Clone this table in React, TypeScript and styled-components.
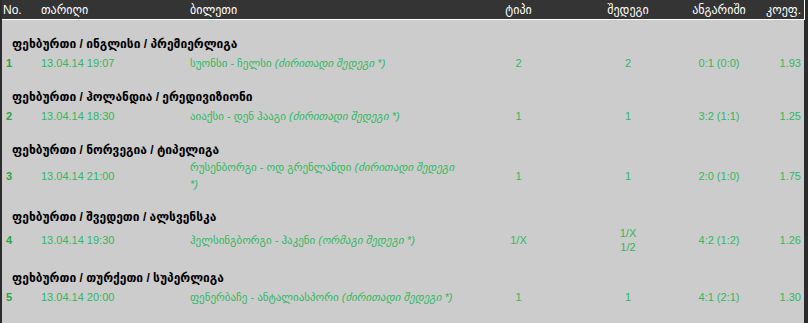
import React from "react";
import styled, { createGlobalStyle } from "styled-components";

const GlobalStyle = createGlobalStyle`
  html, body {
    margin: 0;
    padding: 0;
    background: #2b2b2b;
  }
  body {
    font-family: "Liberation Sans", "DejaVu Sans", sans-serif;
  }
`;

const COLS = "36px 149px 283px 97px 122px 60px 55px";

const Board = styled.div`
  width: 802px;
  margin-left: 2px;
  min-height: 323px;
  background: #cccccc;
`;

const Header = styled.div`
  display: grid;
  grid-template-columns: ${COLS};
  height: 20px;
  width: 803px;
  box-sizing: border-box;
  background: #343434;
  border-right: 1px solid #ffffff;
  border-bottom: 1px solid #ffffff;
  color: #ffffff;
  font-size: 12px;
  align-items: center;
`;

const HeadCell = styled.div<{ $align?: "left" | "center" | "right"; $pad?: number }>`
  text-align: ${(p) => p.$align || "left"};
  padding: 0 ${(p) => (p.$align === "right" ? "3px" : "0")} 0
    ${(p) => (p.$pad !== undefined ? p.$pad : 3)}px;
  white-space: nowrap;
`;

const GroupTitle = styled.div`
  padding: 16px 0 1px 10px;
  font-size: 12px;
  line-height: 16px;
  font-weight: bold;
  color: #000000;
`;

const Row = styled.div`
  display: grid;
  grid-template-columns: ${COLS};
  align-items: center;
  min-height: 20px;
  color: #2fb95e;
  font-size: 11px;
  line-height: 14px;
`;

const Cell = styled.div<{ $align?: "left" | "center" | "right" }>`
  text-align: ${(p) => p.$align || "left"};
  padding: 0 ${(p) => (p.$align === "right" ? "3px" : "0")} 0
    ${(p) => (p.$align === "left" || !p.$align ? "3px" : "0")};
`;

const Num = styled.div`
  padding-left: 4px;
  font-size: 11px;
  font-weight: bold;
  color: #25a83f;
`;

const Ticket = styled(Cell)`
  padding-right: 12px;
  font-size: 11px;
  line-height: 17px;
`;

const Note = styled.i`
  font-style: italic;
`;

type Bet = {
  title: string;
  date: string;
  match: string;
  note: string;
  type: string;
  result: string[];
  score: string;
  coef: string;
};

const bets: Bet[] = [
  {
    title: "ფეხბურთი / ინგლისი / პრემიერლიგა",
    date: "13.04.14 19:07",
    match: "სუონსი - ჩელსი",
    note: "ძირითადი შედეგი *",
    type: "2",
    result: ["2"],
    score: "0:1 (0:0)",
    coef: "1.93",
  },
  {
    title: "ფეხბურთი / ჰოლანდია / ერედივიზიონი",
    date: "13.04.14 18:30",
    match: "აიაქსი - დენ ჰააგი",
    note: "ძირითადი შედეგი *",
    type: "1",
    result: ["1"],
    score: "3:2 (1:1)",
    coef: "1.25",
  },
  {
    title: "ფეხბურთი / ნორვეგია / ტიპელიგა",
    date: "13.04.14 21:00",
    match: "რუსენბორგი - ოდ გრენლანდი",
    note: "ძირითადი შედეგი *",
    type: "1",
    result: ["1"],
    score: "2:0 (1:0)",
    coef: "1.75",
  },
  {
    title: "ფეხბურთი / შვედეთი / ალსვენსკა",
    date: "13.04.14 19:30",
    match: "ჰელსინგბორგი - ჰაკენი",
    note: "ორმაგი შედეგი *",
    type: "1/X",
    result: ["1/X", "1/2"],
    score: "4:2 (1:2)",
    coef: "1.26",
  },
  {
    title: "ფეხბურთი / თურქეთი / სუპერლიგა",
    date: "13.04.14 20:00",
    match: "ფენერბაჩე - ანტალიასპორი",
    note: "ძირითადი შედეგი *",
    type: "1",
    result: ["1"],
    score: "4:1 (2:1)",
    coef: "1.30",
  },
];

const App: React.FC = () => {
  return (
    <>
      <GlobalStyle />
      <Board>
        <Header>
          <HeadCell $pad={1}>No.</HeadCell>
          <HeadCell>თარიღი</HeadCell>
          <HeadCell>ბილეთი</HeadCell>
          <HeadCell $align="center" $pad={0}>ტიპი</HeadCell>
          <HeadCell $align="center" $pad={0}>შედეგი</HeadCell>
          <HeadCell $align="center" $pad={0}>ანგარიში</HeadCell>
          <HeadCell $align="right" $pad={0}>კოეფ.</HeadCell>
        </Header>
        {bets.map((b, i) => (
          <React.Fragment key={i}>
            <GroupTitle>{b.title}</GroupTitle>
            <Row>
              <Num>{i + 1}</Num>
              <Cell>{b.date}</Cell>
              <Ticket>
                {b.match} <Note>({b.note})</Note>
              </Ticket>
              <Cell $align="center">{b.type}</Cell>
              <Cell $align="center">
                {b.result.map((r, j) => (
                  <div key={j}>{r}</div>
                ))}
              </Cell>
              <Cell $align="center">{b.score}</Cell>
              <Cell $align="right">{b.coef}</Cell>
            </Row>
          </React.Fragment>
        ))}
      </Board>
    </>
  );
};

export default App;
